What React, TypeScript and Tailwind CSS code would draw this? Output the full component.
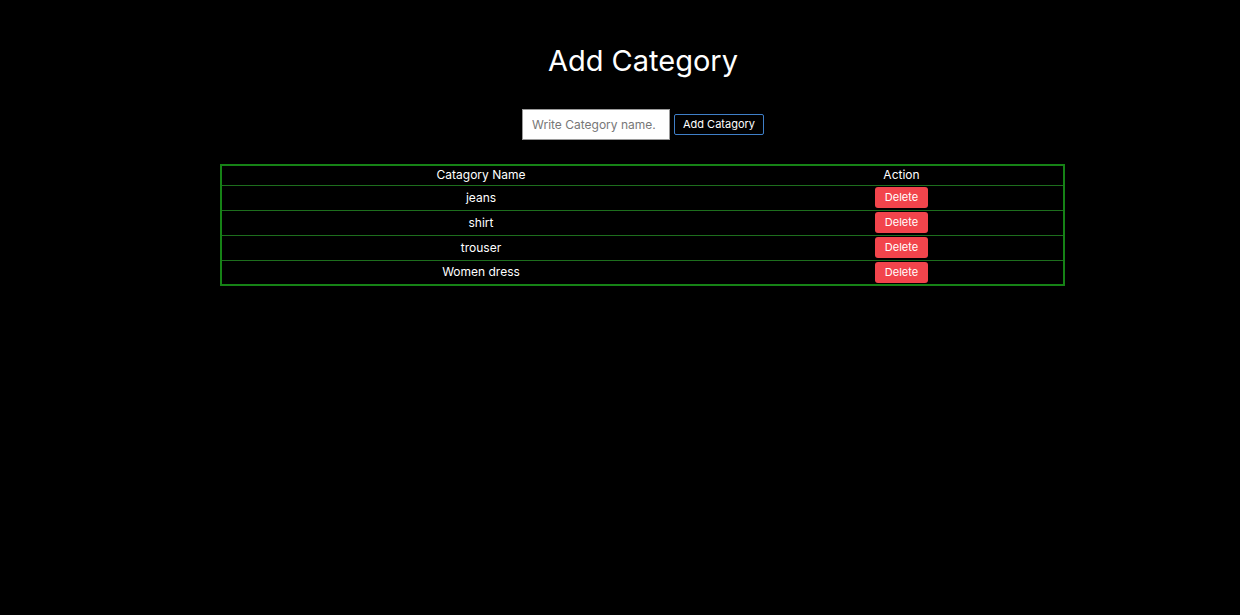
const categories = ["jeans", "shirt", "trouser", "Women dress"];

export default function App() {
  return (
    <div className="min-h-[615px] w-full bg-black pl-[46px] text-white font-['Inter',sans-serif]">
      <div className="flex flex-col items-center">
        <h1 className="mt-[43px] text-[29px] leading-[35px] font-normal">Add Category</h1>

        <div className="mt-[31px] flex items-center gap-[4px]">
          <input
            type="text"
            placeholder="Write Category name."
            className="h-[31px] w-[148px] border border-[#9a9a9a] bg-white px-[9px] text-[12px] text-black placeholder:text-[#777]"
          />
          <button className="h-[21px] w-[90px] rounded-[2px] border border-[#3f7fc8] bg-black text-[11px] text-white">
            Add Catagory
          </button>
        </div>

        <table className="mt-[24px] -ml-[2px] w-[845px] border-collapse border-2 border-[#168216] text-[12px]">
          <thead>
            <tr>
              <th className="h-[20px] w-[520px] p-0 font-normal">Catagory Name</th>
              <th className="h-[20px] p-0 font-normal">Action</th>
            </tr>
          </thead>
          <tbody>
            {categories.map((c) => (
              <tr key={c} className="border-t border-[#1d6e1d]">
                <td className="h-[25px] p-0 text-center">{c}</td>
                <td className="h-[25px] p-0 text-center">
                  <button className="h-[21px] w-[53px] rounded-[3px] bg-[#f2444c] text-[11px] text-white">
                    Delete
                  </button>
                </td>
              </tr>
            ))}
          </tbody>
        </table>
      </div>
    </div>
  );
}
